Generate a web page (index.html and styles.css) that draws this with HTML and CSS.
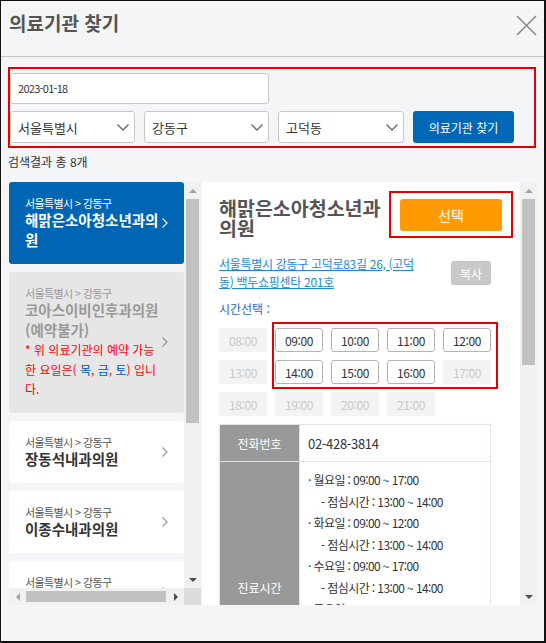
FILE: index.html
```html
<!DOCTYPE html>
<html lang="ko">
<head>
    <meta charset="UTF-8">
    <meta name="viewport" content="width=device-width, initial-scale=1.0">
    <title>의료기관 찾기</title>
    <link rel="stylesheet" href="styles.css">
</head>
<body>
<div class="frame">
    <div class="header">
        <h1>의료기관 찾기</h1>
        <svg class="close" width="21" height="21" viewBox="0 0 21 21">
            <path d="M1 1 L20 20 M20 1 L1 20" stroke="#8a8a8a" stroke-width="1.6" fill="none"/>
        </svg>
    </div>

    <!-- 검색 조건 -->
    <div class="search-box">
        <div class="date-input">2023-01-18</div>
        <div class="search-row">
            <div class="select">서울특별시
                <svg width="12" height="7" viewBox="0 0 12 7"><path d="M0.5 0.5 L6 6 L11.5 0.5" stroke="#666" stroke-width="1.3" fill="none"/></svg>
            </div>
            <div class="select">강동구
                <svg width="12" height="7" viewBox="0 0 12 7"><path d="M0.5 0.5 L6 6 L11.5 0.5" stroke="#666" stroke-width="1.3" fill="none"/></svg>
            </div>
            <div class="select wide">고덕동
                <svg width="12" height="7" viewBox="0 0 12 7"><path d="M0.5 0.5 L6 6 L11.5 0.5" stroke="#666" stroke-width="1.3" fill="none"/></svg>
            </div>
            <button class="search-btn">의료기관 찾기</button>
        </div>
    </div>

    <p class="result-count">검색결과 총 8개</p>

    <div class="content">
        <div class="list-pane">
            <div class="list-view">
                <div class="card active">
                    <div class="card-body">
                        <div class="card-region">서울특별시 &gt; 강동구</div>
                        <div class="card-name">해맑은소아청소년과의원</div>
                    </div>
                    <svg class="chevron" width="6" height="10" viewBox="0 0 6 10"><path d="M0.5 0.5 L5 5 L0.5 9.5" stroke="#e0e8f4" stroke-width="1.3" fill="none"/></svg>
                </div>
                <div class="card disabled">
                    <div class="card-body">
                        <div class="card-region">서울특별시 &gt; 강동구</div>
                        <div class="card-name">코아스이비인후과의원(예약불가)</div>
                        <div class="card-note">* 위 의료기관의 예약 가능한 요일은( <span class="day">목</span>, <span class="day">금</span>, <span class="day">토</span>) 입니다.</div>
                    </div>
                    <svg class="chevron" width="6" height="10" viewBox="0 0 6 10"><path d="M0.5 0.5 L5 5 L0.5 9.5" stroke="#999" stroke-width="1.3" fill="none"/></svg>
                </div>
                <div class="card">
                    <div class="card-body">
                        <div class="card-region">서울특별시 &gt; 강동구</div>
                        <div class="card-name">장동석내과의원</div>
                    </div>
                    <svg class="chevron" width="6" height="10" viewBox="0 0 6 10"><path d="M0.5 0.5 L5 5 L0.5 9.5" stroke="#999" stroke-width="1.3" fill="none"/></svg>
                </div>
                <div class="card">
                    <div class="card-body">
                        <div class="card-region">서울특별시 &gt; 강동구</div>
                        <div class="card-name">이종수내과의원</div>
                    </div>
                    <svg class="chevron" width="6" height="10" viewBox="0 0 6 10"><path d="M0.5 0.5 L5 5 L0.5 9.5" stroke="#999" stroke-width="1.3" fill="none"/></svg>
                </div>
                <div class="card">
                    <div class="card-body">
                        <div class="card-region">서울특별시 &gt; 강동구</div>
                        <div class="card-name">고덕연세내과의원</div>
                    </div>
                    <svg class="chevron" width="6" height="10" viewBox="0 0 6 10"><path d="M0.5 0.5 L5 5 L0.5 9.5" stroke="#999" stroke-width="1.3" fill="none"/></svg>
                </div>
            </div>
            <div class="vscroll">
                <div class="sb-btn"><svg width="8" height="4" viewBox="0 0 8 4"><path d="M0 4 L4 0 L8 4Z" fill="#a3a3a3"/></svg></div>
                <div class="thumb-v list-thumb"></div>
                <div class="sb-space"></div>
                <div class="sb-btn"><svg width="8" height="4" viewBox="0 0 8 4"><path d="M0 0 L4 4 L8 0Z" fill="#505050"/></svg></div>
            </div>
            <div class="hscroll">
                <div class="sb-btn"><svg width="4" height="8" viewBox="0 0 4 8"><path d="M4 0 L0 4 L4 8Z" fill="#a3a3a3"/></svg></div>
                <div class="thumb-h"></div>
                <div class="sb-space"></div>
                <div class="sb-btn"><svg width="4" height="8" viewBox="0 0 4 8"><path d="M0 0 L4 4 L0 8Z" fill="#505050"/></svg></div>
            </div>
            <div class="corner"></div>
        </div>

        <div class="detail">
            <div class="detail-head">
                <h2 class="detail-title">해맑은소아청소년과 의원</h2>
                <div class="pick-box"><button class="pick-btn">선택</button></div>
            </div>
            <div class="address-row">
                <a class="address">서울특별시 강동구 고덕로83길 26, (고덕동) 백두쇼핑센타 201호</a>
                <button class="copy-btn">복사</button>
            </div>
            <p class="time-label">시간선택 :</p>
            <div class="time-grid">
                <div class="slot off">08:00</div>
                <div class="slot on">09:00</div>
                <div class="slot on">10:00</div>
                <div class="slot on">11:00</div>
                <div class="slot on">12:00</div>
                <div class="slot off">13:00</div>
                <div class="slot on">14:00</div>
                <div class="slot on">15:00</div>
                <div class="slot on">16:00</div>
                <div class="slot off">17:00</div>
                <div class="slot off">18:00</div>
                <div class="slot off">19:00</div>
                <div class="slot off">20:00</div>
                <div class="slot off">21:00</div>
                <div class="slot-highlight"></div>
            </div>
            <table class="info-table">
                <tr class="phone">
                    <th>전화번호</th>
                    <td>02-428-3814</td>
                </tr>
                <tr class="hours">
                    <th>진료시간</th>
                    <td>
                        <div>· 월요일 : 09:00 ~ 17:00</div>
                        <div class="lunch">- 점심시간 : 13:00 ~ 14:00</div>
                        <div>· 화요일 : 09:00 ~ 12:00</div>
                        <div class="lunch">- 점심시간 : 13:00 ~ 14:00</div>
                        <div>· 수요일 : 09:00 ~ 17:00</div>
                        <div class="lunch">- 점심시간 : 13:00 ~ 14:00</div>
                        <div>· 목요일 : 09:00 ~ 17:00</div>
                        <div class="lunch">- 점심시간 : 13:00 ~ 14:00</div>
                        <div>· 금요일 : 09:00 ~ 17:00</div>
                        <div class="lunch">- 점심시간 : 13:00 ~ 14:00</div>
                        <div>· 토요일 : 09:00 ~ 13:00</div>
                    </td>
                </tr>
            </table>
        </div>
        <div class="vscroll">
            <div class="sb-btn"><svg width="8" height="4" viewBox="0 0 8 4"><path d="M0 4 L4 0 L8 4Z" fill="#a3a3a3"/></svg></div>
            <div class="thumb-v detail-thumb"></div>
            <div class="sb-space"></div>
            <div class="sb-btn"><svg width="8" height="4" viewBox="0 0 8 4"><path d="M0 0 L4 4 L8 0Z" fill="#505050"/></svg></div>
        </div>
    </div>
</div>
</body>
</html>
```

FILE: styles.css
```css
* {
    box-sizing: border-box;
}
body {
    margin: 0;
    font-family: "Noto Sans CJK KR", "Noto Sans", sans-serif;
    color: #333;
}
.frame {
    width: 546px;
    height: 643px;
    border: 1px solid #111;
    border-right-width: 2px;
    border-bottom-width: 2px;
    background: #f4f5f7;
    overflow: hidden;
}
.header {
    height: 56px;
    border-bottom: 1px solid #c6c6c6;
    display: flex;
    justify-content: space-between;
    align-items: flex-start;
    padding: 0 7px 0 8px;
}
.header h1 {
    margin: 10px 0 0;
    font-size: 19px;
    line-height: 24px;
    font-weight: bold;
    color: #555;
}
.close {
    margin-top: 14px;
}

/* 검색 조건 */
.search-box {
    margin: 10px 0 0 7px;
    width: 528px;
    border: 2px solid #e60000;
    padding: 4px 0 3px 0;
}
.date-input {
    width: 259px;
    height: 31px;
    background: #fff;
    border: 1px solid #c8c8c8;
    border-radius: 3px;
    padding-left: 7px;
    font-size: 11px;
    line-height: 29px;
    letter-spacing: -0.7px;
}
.search-row {
    display: flex;
    gap: 9px;
    margin-top: 7px;
}
.select {
    width: 125px;
    height: 32px;
    display: flex;
    align-items: center;
    justify-content: space-between;
    padding: 0 5px 0 7px;
    background: #fff;
    border: 1px solid #c8c8c8;
    border-radius: 3px;
    font-size: 13px;
}
.select.wide {
    width: 126px;
}
.search-btn {
    width: 101px;
    height: 32px;
    border: none;
    border-radius: 3px;
    background: #0068b7;
    color: #fff;
    font-family: inherit;
    font-size: 12px;
    padding: 0;
}
.result-count {
    margin: 6px 0 0 7px;
    font-size: 12px;
    line-height: 16px;
}

/* 목록 + 상세 */
.content {
    display: flex;
    margin: 12px 0 0 8px;
    height: 423px;
}
.list-pane {
    display: grid;
    grid-template-columns: 175px 17px;
    grid-template-rows: 406px 17px;
    width: 192px;
}
.list-view {
    overflow: hidden;
    display: flex;
    flex-direction: column;
    gap: 8px;
}
.card {
    display: flex;
    align-items: center;
    flex: none;
    background: #fff;
    border-radius: 3px;
    padding: 14px 16px 14px 16px;
}
.card-body {
    flex: 1;
}
.chevron {
    flex: none;
    margin-left: 2px;
}
.card-region {
    font-size: 11px;
    line-height: 14px;
    color: #555;
    letter-spacing: -0.6px;
}
.card-name {
    font-size: 14.5px;
    line-height: 20px;
    font-weight: bold;
    color: #333;
}
.card.active {
    background: #0066b3;
}
.card.active .card-region,
.card.active .card-name {
    color: #fff;
}
.card.disabled {
    background: #e6e6e6;
}
.card.disabled .card-region,
.card.disabled .card-name {
    color: #9a9a9a;
}
.card-note {
    width: 132px;
    font-size: 12px;
    line-height: 19.5px;
    color: #ff0000;
}
.card-note .day {
    color: #0050c8;
}

/* 스크롤바 */
.vscroll {
    width: 17px;
    background: #f1f1f1;
    display: flex;
    flex-direction: column;
    align-items: center;
}
.hscroll {
    display: flex;
    align-items: center;
    background: #f1f1f1;
}
.sb-btn {
    width: 17px;
    height: 17px;
    flex: none;
    display: flex;
    align-items: center;
    justify-content: center;
}
.sb-space {
    flex: 1;
}
.thumb-v {
    width: 13px;
    flex: none;
    background: #c1c1c1;
}
.list-thumb {
    height: 224px;
}
.detail-thumb {
    height: 166px;
}
.thumb-h {
    width: 140px;
    height: 11px;
    flex: none;
    background: #c1c1c1;
}
.corner {
    background: #dcdcdc;
}

/* 상세 */
.detail {
    width: 318px;
    margin-left: 1px;
    background: #fff;
    padding: 9px 7px 0 17px;
    overflow: hidden;
}
.detail-head {
    display: flex;
    justify-content: space-between;
    align-items: flex-start;
}
.detail-title {
    margin: 7px 0 0;
    width: 170px;
    font-size: 19.5px;
    line-height: 20px;
    font-weight: bold;
    color: #555;
}
.pick-box {
    border: 2px solid #e60000;
    padding: 6px 9px 5px;
}
.pick-btn {
    display: block;
    width: 102px;
    height: 32px;
    background: #ff9b00;
    color: #fff;
    border: none;
    border-radius: 3px;
    font-family: inherit;
    font-size: 14px;
    padding: 0;
}
.address-row {
    display: flex;
    justify-content: space-between;
    align-items: center;
    width: 272px;
    margin-top: 17px;
}
.address {
    width: 203px;
    font-size: 12px;
    line-height: 18px;
    color: #1a8ad4;
    text-decoration: underline;
    letter-spacing: -0.3px;
}
.copy-btn {
    width: 40px;
    height: 24px;
    border: none;
    border-radius: 3px;
    background: #c8c8c8;
    color: #fff;
    font-family: inherit;
    font-size: 12px;
    padding: 0;
}
.time-label {
    margin: 9px 0 0;
    font-size: 12px;
    line-height: 18px;
    color: #2e6bb5;
}
.time-grid {
    position: relative;
    display: grid;
    grid-template-columns: repeat(5, 48px);
    grid-auto-rows: 24px;
    gap: 8px;
    margin-top: 10px;
}
.slot {
    border-radius: 3px;
    font-size: 12px;
    display: flex;
    align-items: center;
    justify-content: center;
    letter-spacing: -0.4px;
}
.slot.off {
    background: #f3f3f3;
    color: #c8c8c8;
}
.slot.on {
    background: #fff;
    border: 1px solid #b4b4b4;
    color: #333;
}
.slot-highlight {
    position: absolute;
    left: 53px;
    top: -6px;
    width: 226px;
    height: 67px;
    border: 2px solid #e60000;
}
.info-table {
    margin-top: 8px;
    width: 272px;
    border-collapse: collapse;
    font-size: 12px;
}
.info-table th {
    width: 80px;
    background: #999;
    color: #fff;
    font-weight: normal;
    border: 1px solid #dfe3ee;
}
.info-table td {
    border: 1px solid #dfe3ee;
    padding: 0 8px;
    color: #333;
    letter-spacing: -0.6px;
}
.phone td {
    height: 37px;
    font-size: 13px;
    letter-spacing: -0.3px;
}
.hours td {
    padding: 7px 8px;
    line-height: 21.5px;
}
.hours .lunch {
    padding-left: 13px;
}
```
